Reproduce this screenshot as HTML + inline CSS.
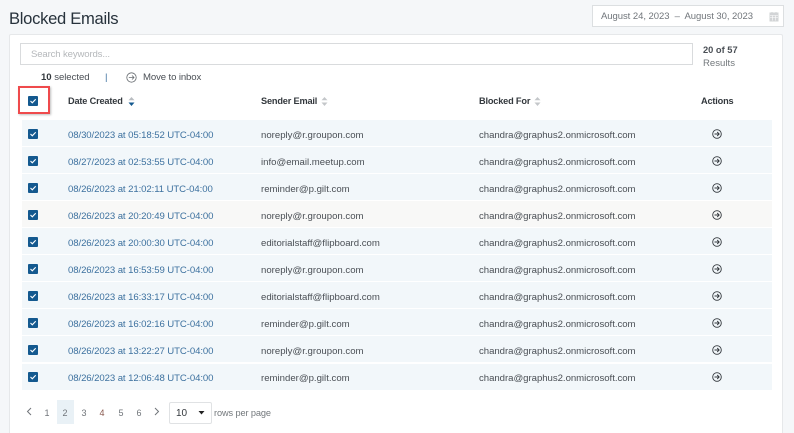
<!DOCTYPE html>
<html><head><meta charset="utf-8"><style>
*{box-sizing:border-box}
html,body{margin:0;padding:0}
html{width:794px;height:433px;overflow:hidden}
body{width:794px;height:433px;overflow:hidden;background:#f5f7f9;font-family:"Liberation Sans",sans-serif;position:relative;color:#4a4f55}
.a{position:absolute;white-space:nowrap}
.card{left:9px;top:34px;width:774px;height:399px;background:#fff;border:1px solid #e6e8ea;border-bottom:0;border-radius:2px 2px 0 0}
.row{position:absolute;left:22px;width:750px;height:26px;background:#f2f7fa}
.row.g{background:#f8f8f7}
.t{font-size:9.6px;line-height:12px}
.cb{position:absolute;width:10px;height:10px;background:#14598f;border-radius:1px}
.cb svg{display:block}
.d{color:#3d719f;left:68px;letter-spacing:-.09px;margin-top:2px}
.s{left:261px;margin-top:2px}.b{left:479px;margin-top:2px;letter-spacing:-.03px}
.h{font-weight:bold;color:#33383d;font-size:9.2px;line-height:12px;letter-spacing:-.17px}
.p{font-size:9px;color:#70757a;top:407px;line-height:12px;width:12px;text-align:center}
</style></head><body>
<div class="a" style="left:9px;top:8px;font-size:16.6px;line-height:22px;color:#27323c;letter-spacing:-.3px">Blocked Emails</div>
<div class="a" style="left:592px;top:5px;width:192px;height:22px;background:#fff;border:1px solid #dcdfe1"></div>
<div class="a" style="left:601px;top:10px;font-size:9.5px;line-height:12px;color:#71767b;margin-top:1px;letter-spacing:-.05px">August 24, 2023 &nbsp;–&nbsp; August 30, 2023</div>
<svg class="a" style="left:769px;top:11px" width="11" height="11" viewBox="0 0 11 11"><path d="M1 2h8v8H1zM3 1v2M7 1v2" fill="#d2d4d6" stroke="#d2d4d6"/><path d="M1 4.500h8M1 6.500h8M3.700 4.500v5M6.300 4.500v5" stroke="#fff" stroke-width=".6"/></svg>
<div class="a card"></div>
<div class="a" style="left:20px;top:43px;width:673px;height:22px;border:1px solid #d9dbdd;background:#fff"></div>
<div class="a t" style="left:31px;top:49px;color:#b5b8bb;letter-spacing:-.15px">Search keywords...</div>
<div class="a t" style="left:703px;top:44px;font-weight:bold;font-size:9.3px">20 of 57</div>
<div class="a t" style="left:703px;top:58px;color:#73787c">Results</div>
<div class="a t" style="left:41px;top:72px;letter-spacing:-.05px"><b style="color:#33383d">10</b> selected</div>
<div class="a t" style="left:105px;top:72px;color:#3d719f">|</div>
<svg class="a" style="left:126px;top:72px" width="11" height="11" viewBox="0 0 11 11" fill="none" stroke="#666b70" stroke-width=".8"><circle cx="5.500" cy="5.500" r="4.700"/><path d="M2.800 5.500h5.200M6 3.500l2 2-2 2"/></svg>
<div class="a t" style="left:143px;top:72px;letter-spacing:-.12px">Move to inbox</div>
<div class="a" style="left:18px;top:86px;width:32px;height:28px;border:2px solid #ef4a4c;box-shadow:1px 1px 2px rgba(0,0,0,.25)"></div>
<div class="cb" style="left:28px;top:96px"><svg width="10" height="10" viewBox="0 0 10 10"><path d="M2.500 5l1.800 1.800 3.400-3.600" fill="none" stroke="#fff" stroke-width="1.100"/></svg></div>
<div class="a h" style="left:68px;top:95px">Date Created</div>
<svg class="a" style="left:128px;top:97px" width="7" height="9"><path d="M3.500 0L6.500 3.300H.5z" fill="#b9bdc1"/><path d="M3.500 9L6.500 5.500H.5z" fill="#14598f"/></svg>
<div class="a h" style="left:261px;top:95px">Sender Email</div>
<svg class="a" style="left:321px;top:97px" width="7" height="9"><path d="M3.500 0L6.500 3.300H.5zM3.500 9L6.500 5.500H.5z" fill="#c4c7ca"/></svg>
<div class="a h" style="left:479px;top:95px">Blocked For</div>
<svg class="a" style="left:534px;top:97px" width="7" height="9"><path d="M3.500 0L6.500 3.300H.5zM3.500 9L6.500 5.500H.5z" fill="#c4c7ca"/></svg>
<div class="a h" style="left:701px;top:95px">Actions</div>

<div class="row" style="top:120px"></div><div class="cb" style="left:28px;top:129px"><svg width="10" height="10" viewBox="0 0 10 10"><path d="M2.500 5l1.800 1.800 3.400-3.600" fill="none" stroke="#fff" stroke-width="1.100"/></svg></div><div class="a t d" style="top:128px">08/30/2023 at 05:18:52 UTC-04:00</div><div class="a t s" style="top:128px">noreply@r.groupon.com</div><div class="a t b" style="top:128px">chandra@graphus2.onmicrosoft.com</div><svg class="a" style="left:712px;top:129px" width="10" height="10" viewBox="0 0 10 10" fill="none" stroke="#33383d" stroke-width=".9"><circle cx="5" cy="5" r="4.300"/><path d="M2.500 5h4.500M5.200 3l2 2-2 2"/></svg>
<div class="row" style="top:147px"></div><div class="cb" style="left:28px;top:156px"><svg width="10" height="10" viewBox="0 0 10 10"><path d="M2.500 5l1.800 1.800 3.400-3.600" fill="none" stroke="#fff" stroke-width="1.100"/></svg></div><div class="a t d" style="top:155px">08/27/2023 at 02:53:55 UTC-04:00</div><div class="a t s" style="top:155px">info@email.meetup.com</div><div class="a t b" style="top:155px">chandra@graphus2.onmicrosoft.com</div><svg class="a" style="left:712px;top:156px" width="10" height="10" viewBox="0 0 10 10" fill="none" stroke="#33383d" stroke-width=".9"><circle cx="5" cy="5" r="4.300"/><path d="M2.500 5h4.500M5.200 3l2 2-2 2"/></svg>
<div class="row" style="top:174px"></div><div class="cb" style="left:28px;top:183px"><svg width="10" height="10" viewBox="0 0 10 10"><path d="M2.500 5l1.800 1.800 3.400-3.600" fill="none" stroke="#fff" stroke-width="1.100"/></svg></div><div class="a t d" style="top:182px">08/26/2023 at 21:02:11 UTC-04:00</div><div class="a t s" style="top:182px">reminder@p.gilt.com</div><div class="a t b" style="top:182px">chandra@graphus2.onmicrosoft.com</div><svg class="a" style="left:712px;top:183px" width="10" height="10" viewBox="0 0 10 10" fill="none" stroke="#33383d" stroke-width=".9"><circle cx="5" cy="5" r="4.300"/><path d="M2.500 5h4.500M5.200 3l2 2-2 2"/></svg>
<div class="row g" style="top:201px"></div><div class="cb" style="left:28px;top:210px"><svg width="10" height="10" viewBox="0 0 10 10"><path d="M2.500 5l1.800 1.800 3.400-3.600" fill="none" stroke="#fff" stroke-width="1.100"/></svg></div><div class="a t d" style="top:209px">08/26/2023 at 20:20:49 UTC-04:00</div><div class="a t s" style="top:209px">noreply@r.groupon.com</div><div class="a t b" style="top:209px">chandra@graphus2.onmicrosoft.com</div><svg class="a" style="left:712px;top:210px" width="10" height="10" viewBox="0 0 10 10" fill="none" stroke="#33383d" stroke-width=".9"><circle cx="5" cy="5" r="4.300"/><path d="M2.500 5h4.500M5.200 3l2 2-2 2"/></svg>
<div class="row" style="top:228px"></div><div class="cb" style="left:28px;top:237px"><svg width="10" height="10" viewBox="0 0 10 10"><path d="M2.500 5l1.800 1.800 3.400-3.600" fill="none" stroke="#fff" stroke-width="1.100"/></svg></div><div class="a t d" style="top:236px">08/26/2023 at 20:00:30 UTC-04:00</div><div class="a t s" style="top:236px">editorialstaff@flipboard.com</div><div class="a t b" style="top:236px">chandra@graphus2.onmicrosoft.com</div><svg class="a" style="left:712px;top:237px" width="10" height="10" viewBox="0 0 10 10" fill="none" stroke="#33383d" stroke-width=".9"><circle cx="5" cy="5" r="4.300"/><path d="M2.500 5h4.500M5.200 3l2 2-2 2"/></svg>
<div class="row" style="top:255px"></div><div class="cb" style="left:28px;top:264px"><svg width="10" height="10" viewBox="0 0 10 10"><path d="M2.500 5l1.800 1.800 3.400-3.600" fill="none" stroke="#fff" stroke-width="1.100"/></svg></div><div class="a t d" style="top:263px">08/26/2023 at 16:53:59 UTC-04:00</div><div class="a t s" style="top:263px">noreply@r.groupon.com</div><div class="a t b" style="top:263px">chandra@graphus2.onmicrosoft.com</div><svg class="a" style="left:712px;top:264px" width="10" height="10" viewBox="0 0 10 10" fill="none" stroke="#33383d" stroke-width=".9"><circle cx="5" cy="5" r="4.300"/><path d="M2.500 5h4.500M5.200 3l2 2-2 2"/></svg>
<div class="row" style="top:282px"></div><div class="cb" style="left:28px;top:291px"><svg width="10" height="10" viewBox="0 0 10 10"><path d="M2.500 5l1.800 1.800 3.400-3.600" fill="none" stroke="#fff" stroke-width="1.100"/></svg></div><div class="a t d" style="top:290px">08/26/2023 at 16:33:17 UTC-04:00</div><div class="a t s" style="top:290px">editorialstaff@flipboard.com</div><div class="a t b" style="top:290px">chandra@graphus2.onmicrosoft.com</div><svg class="a" style="left:712px;top:291px" width="10" height="10" viewBox="0 0 10 10" fill="none" stroke="#33383d" stroke-width=".9"><circle cx="5" cy="5" r="4.300"/><path d="M2.500 5h4.500M5.200 3l2 2-2 2"/></svg>
<div class="row" style="top:309px"></div><div class="cb" style="left:28px;top:318px"><svg width="10" height="10" viewBox="0 0 10 10"><path d="M2.500 5l1.800 1.800 3.400-3.600" fill="none" stroke="#fff" stroke-width="1.100"/></svg></div><div class="a t d" style="top:317px">08/26/2023 at 16:02:16 UTC-04:00</div><div class="a t s" style="top:317px">reminder@p.gilt.com</div><div class="a t b" style="top:317px">chandra@graphus2.onmicrosoft.com</div><svg class="a" style="left:712px;top:318px" width="10" height="10" viewBox="0 0 10 10" fill="none" stroke="#33383d" stroke-width=".9"><circle cx="5" cy="5" r="4.300"/><path d="M2.500 5h4.500M5.200 3l2 2-2 2"/></svg>
<div class="row" style="top:336px"></div><div class="cb" style="left:28px;top:345px"><svg width="10" height="10" viewBox="0 0 10 10"><path d="M2.500 5l1.800 1.800 3.400-3.600" fill="none" stroke="#fff" stroke-width="1.100"/></svg></div><div class="a t d" style="top:344px">08/26/2023 at 13:22:27 UTC-04:00</div><div class="a t s" style="top:344px">noreply@r.groupon.com</div><div class="a t b" style="top:344px">chandra@graphus2.onmicrosoft.com</div><svg class="a" style="left:712px;top:345px" width="10" height="10" viewBox="0 0 10 10" fill="none" stroke="#33383d" stroke-width=".9"><circle cx="5" cy="5" r="4.300"/><path d="M2.500 5h4.500M5.200 3l2 2-2 2"/></svg>
<div class="row" style="top:364px"></div><div class="cb" style="left:28px;top:372px"><svg width="10" height="10" viewBox="0 0 10 10"><path d="M2.500 5l1.800 1.800 3.400-3.600" fill="none" stroke="#fff" stroke-width="1.100"/></svg></div><div class="a t d" style="top:371px">08/26/2023 at 12:06:48 UTC-04:00</div><div class="a t s" style="top:371px">reminder@p.gilt.com</div><div class="a t b" style="top:371px">chandra@graphus2.onmicrosoft.com</div><svg class="a" style="left:712px;top:372px" width="10" height="10" viewBox="0 0 10 10" fill="none" stroke="#33383d" stroke-width=".9"><circle cx="5" cy="5" r="4.300"/><path d="M2.500 5h4.500M5.200 3l2 2-2 2"/></svg>

<svg class="a" style="left:26px;top:407px" width="7" height="9" fill="none" stroke="#70757a"><path d="M5 1L1.500 4.500 5 8"/></svg>
<div class="a" style="left:57px;top:400px;width:17px;height:24px;background:#e9f1f6"></div>
<div class="a p" style="left:41px">1</div>
<div class="a p" style="left:59px">2</div>
<div class="a p" style="left:78px">3</div>
<div class="a p" style="left:96px;color:#8a5a50">4</div>
<div class="a p" style="left:115px">5</div>
<div class="a p" style="left:133px">6</div>
<svg class="a" style="left:153px;top:407px" width="7" height="9" fill="none" stroke="#70757a"><path d="M2 1l3.500 3.500L2 8"/></svg>
<div class="a" style="left:169px;top:402px;width:43px;height:22px;background:#fff;border:1px solid #e0e2e4;border-radius:2px"></div>
<div class="a" style="left:176px;top:407px;font-size:10px;line-height:13px;color:#33383d">10</div>
<svg class="a" style="left:198px;top:411px" width="7" height="4"><path d="M.5 0h6L3.500 3.500z" fill="#222"/></svg>
<div class="a t" style="left:214px;top:407px;color:#73787c;font-size:9.2px;letter-spacing:-.1px">rows per page</div>
</body></html>
